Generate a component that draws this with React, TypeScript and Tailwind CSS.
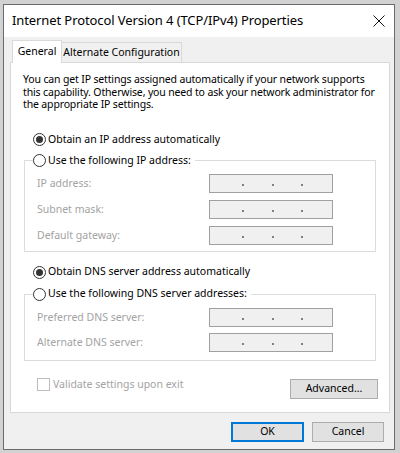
import React from "react";

const font = { fontFamily: '"Noto Sans", "Open Sans", sans-serif' };

function Radio({ checked = false }: { checked?: boolean }) {
  return (
    <span className="flex h-[13px] w-[13px] shrink-0 items-center justify-center rounded-full border border-[#333] bg-white">
      {checked ? <span className="h-[7px] w-[7px] rounded-full bg-[#333]" /> : null}
    </span>
  );
}

function IpBox() {
  return (
    <div className="flex h-[19px] w-[124px] items-center border border-[#a0a0a0] bg-[#f0f0f0] pl-[32px]">
      <span className="mt-[3px] h-[2px] w-[2px] bg-[#808080]" />
      <span className="ml-[28px] mt-[3px] h-[2px] w-[2px] bg-[#808080]" />
      <span className="ml-[27px] mt-[3px] h-[2px] w-[2px] bg-[#808080]" />
    </div>
  );
}

function FieldRow({ label }: { label: string }) {
  return (
    <div className="flex items-center">
      <span className="w-[172px] text-[#a3a3a3]">{label}</span>
      <IpBox />
    </div>
  );
}

type GroupProps = { legend: string; rows: string[]; gap: string; pt: string; pb: string };

function Group({ legend, rows, gap, pt, pb }: GroupProps) {
  return (
    <fieldset className="mx-[13px] border border-[#dcdcdc]">
      <legend className="ml-[8px] flex items-center gap-[2px] bg-white pr-[4px]">
        <Radio />
        <span>{legend}</span>
      </legend>
      <div className={`flex flex-col px-[12px] ${pt} ${pb} ${gap}`}>
        {rows.map((r) => (
          <FieldRow key={r} label={r} />
        ))}
      </div>
    </fieldset>
  );
}

export default function App() {
  return (
    <div className="h-[453px] w-[400px] overflow-hidden bg-[#d2d2d2] pl-[3px] pt-[4px]" style={font}>
      <div className="flex h-[446px] w-[392px] flex-col border border-[#6b6b6b] bg-[#f0f0f0] text-black">
        {/* title bar */}
        <div className="flex h-[32px] items-center justify-between bg-white pl-[8px] pr-[8px]">
          <span className="text-[13px] tracking-[-0.1px]">Internet Protocol Version 4 (TCP/IPv4) Properties</span>
          <svg width="12" height="12" viewBox="0 0 12 12" className="mr-[1px]">
            <path d="M0.5 0.5 L11.5 11.5 M11.5 0.5 L0.5 11.5" stroke="#111" strokeWidth="1" />
          </svg>
        </div>

        <div className="flex flex-1 flex-col px-[6px] pt-[3px] text-[10.5px]">
          {/* tabs */}
          <div className="relative z-10 flex items-end pl-[2px]">
            <div className="-mb-px flex h-[23px] w-[50px] items-center justify-center border border-b-0 border-[#d9d9d9] bg-white">
              General
            </div>
            <div className="flex h-[20px] w-[120px] items-center justify-center border border-l-0 border-b-0 border-[#d9d9d9] bg-[#f0f0f0]">
              Alternate Configuration
            </div>
          </div>

          {/* panel */}
          <div className="flex h-[351px] w-[380px] flex-col border border-[#d9d9d9] bg-white">
            <p className="px-[12px] pt-[10px] leading-[12.5px] tracking-[-0.15px]">
              You can get IP settings assigned automatically if your network supports this capability. Otherwise, you need to ask your network administrator for the appropriate IP settings.
            </p>

            <div className="ml-[22px] mt-[21px] flex h-[16px] items-center gap-[2px]">
              <Radio checked />
              <span>Obtain an IP address automatically</span>
            </div>

            <div className="mt-[5px]">
              <Group legend="Use the following IP address:" rows={["IP address:", "Subnet mask:", "Default gateway:"]} gap="gap-[7px]" pt="pt-[6px]" pb="pb-[6px]" />
            </div>

            <div className="ml-[22px] mt-[12px] flex h-[16px] items-center gap-[2px]">
              <Radio checked />
              <span>Obtain DNS server address automatically</span>
            </div>

            <div className="mt-[6px]">
              <Group legend="Use the following DNS server addresses:" rows={["Preferred DNS server:", "Alternate DNS server:"]} gap="gap-[6px]" pt="pt-[6px]" pb="pb-[8px]" />
            </div>

            <div className="mt-[16px] flex items-start justify-between pl-[26px] pr-[11px]">
              <div className="flex items-center gap-[3px] text-[#a3a3a3]">
                <span className="h-[13px] w-[13px] border border-[#bcbcbc] bg-white" />
                <span>Validate settings upon exit</span>
              </div>
              <button className="mt-[2px] h-[20px] w-[88px] border border-[#adadad] bg-[#e1e1e1]">Advanced...</button>
            </div>
          </div>

          {/* footer */}
          <div className="mt-[9px] flex justify-end gap-[8px] pr-[4px]">
            <button className="h-[20px] w-[73px] border-2 border-[#0078d7] bg-[#e1e1e1]">OK</button>
            <button className="h-[20px] w-[72px] border border-[#adadad] bg-[#e1e1e1]">Cancel</button>
          </div>
        </div>
      </div>
    </div>
  );
}
